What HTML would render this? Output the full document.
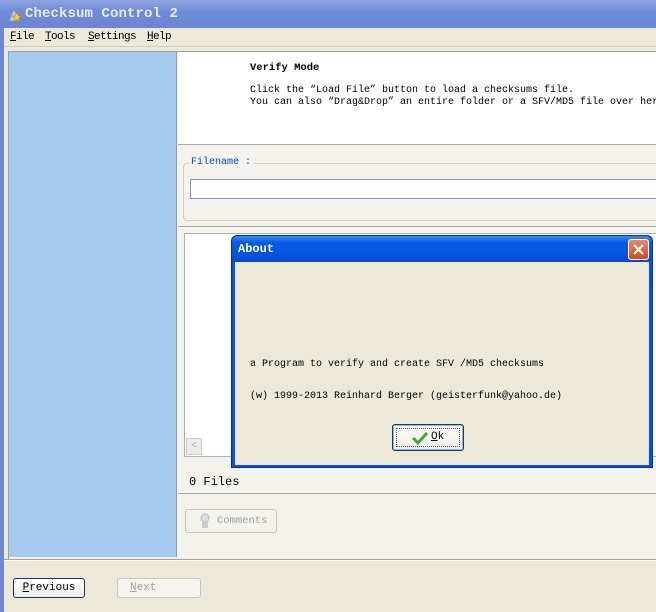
<!DOCTYPE html>
<html><head><meta charset="utf-8"><style>
*{margin:0;padding:0;box-sizing:border-box}
body{width:656px;height:612px;overflow:hidden;background:#ece9d8;font-family:"Liberation Mono","Noto Sans CJK SC",monospace;font-size:11px;color:#000;position:relative}
.abs{position:absolute}
u{text-decoration:underline}
.m{position:absolute;top:31px;font-size:11px;letter-spacing:-0.6px}
</style></head><body>
<div class="abs" style="left:0;top:0;width:656px;height:28px;background:linear-gradient(#8fa4e0,#6f8ad8 40%,#6a85d4);"></div>
<div class="abs" style="left:7px;top:7px;width:14px;height:14px;">
<svg width="16" height="16"><polygon points="2,14 7,2 12,14" fill="#c8cce8" stroke="#8890b8"/><polygon points="10,5 11.5,9 15,9 12,11 13,15 10,12.5 7,15 8,11 5,9 8.5,9" fill="#f5d030" stroke="#b08a10" stroke-width=".6"/></svg></div>
<div class="abs" style="left:25px;top:6px;color:#e8eefc;font-weight:bold;font-size:14px;letter-spacing:0.1px;">Checksum Control 2</div>
<div class="abs" style="left:0;top:28px;width:4px;height:584px;background:#6d86d6"></div>
<div class="abs" style="left:4px;top:28px;width:652px;height:19px;background:#ece9d8;border-bottom:1px solid #d0cdbd"></div>
<div class="m" style="left:10px"><u>F</u>ile</div>
<div class="m" style="left:45px"><u>T</u>ools</div>
<div class="m" style="left:88px"><u>S</u>ettings</div>
<div class="m" style="left:147px"><u>H</u>elp</div>
<div class="abs" style="left:8px;top:51px;width:648px;height:508px;border-top:1px solid #a0a0a0;border-left:1px solid #a0a0a0;background:#f3f2ec"></div>
<div class="abs" style="left:9px;top:52px;width:168px;height:505px;background:#a6caf0;border-right:1px solid #999"></div>
<div class="abs" style="left:178px;top:52px;width:478px;height:93px;background:#fff;border-bottom:1px solid #a8a8a8"></div>
<div class="abs" style="left:250px;top:62px;font-weight:bold;font-size:10.5px">Verify Mode</div>
<div class="abs" style="left:250px;top:85px;font-size:10px;line-height:12px;white-space:nowrap">Click the “Load File” button to load a checksums file.<br>You can also “Drag&amp;Drop” an entire folder or a SFV/MD5 file over here</div>
<div class="abs" style="left:183px;top:163px;width:480px;height:58px;border:1px solid #cfcdc2;border-radius:4px"></div>
<div class="abs" style="left:189px;top:157px;background:#f3f2ec;color:#0046d5;font-size:10px;padding:0 2px">Filename :</div>
<div class="abs" style="left:190px;top:179px;width:470px;height:20px;background:#fff;border:1px solid #7f9db9"></div>
<div class="abs" style="left:178px;top:226px;width:478px;height:1px;background:#a8a8a8"></div>
<div class="abs" style="left:184px;top:233px;width:480px;height:224px;background:#fff;border:1px solid #a8b0bc"></div>
<div class="abs" style="left:186px;top:438px;width:16px;height:17px;background:#ecebe4;border:1px solid #ccc;color:#aaa;font-size:10px;text-align:center;line-height:15px">&lt;</div>
<div class="abs" style="left:189px;top:475px;font-size:12px">0 Files</div>
<div class="abs" style="left:178px;top:493px;width:478px;height:1px;background:#a8a8a8"></div>
<div class="abs" style="left:185px;top:509px;width:92px;height:24px;border:1px solid #c9c7ba;border-radius:3px;background:#f3f2ec;color:#a0a0a0;font-size:10.5px;line-height:22px;padding-left:31px">Comments</div>
<div class="abs" style="left:199px;top:513px;width:10px;height:16px;"><svg width="12" height="16"><circle cx="6" cy="5" r="4" fill="#ddd" stroke="#bbb"/><rect x="3" y="9" width="6" height="6" fill="#ccc"/></svg></div>
<div class="abs" style="left:4px;top:559px;width:652px;height:2px;border-top:1px solid #a0a0a0;background:#fff"></div>
<div class="abs" style="left:13px;top:578px;width:72px;height:20px;border:1px solid #1b3563;border-radius:3px;background:linear-gradient(#fff,#ecebe6);font-size:11px;text-align:center;line-height:18px"><u>P</u>revious</div>
<div class="abs" style="left:117px;top:578px;width:84px;height:20px;border:1px solid #c9c7ba;border-radius:3px;background:#f4f3ee;color:#a3a39b;font-size:11px;line-height:18px;padding-left:12px"><u>N</u>ext</div>
<div class="abs" style="left:231px;top:235px;width:422px;height:233px;background:#0a52dc;border-radius:6px 6px 0 0;border:1px solid #0032a8"></div>
<div class="abs" style="left:232px;top:236px;width:420px;height:26px;background:linear-gradient(#3d8cf6,#0759e4 25%,#0552dc 80%,#0a48c8);border-radius:6px 6px 0 0"></div>
<div class="abs" style="left:238px;top:242px;color:#fff;font-weight:bold;font-size:12px">About</div>
<div class="abs" style="left:628px;top:239px;width:21px;height:21px;background:linear-gradient(#e88a6c,#d04a22);border:1px solid #fff;border-radius:3px"><svg width="19" height="19"><path d="M5 5L14 14M14 5L5 14" stroke="#fff" stroke-width="2.2"/></svg></div>
<div class="abs" style="left:235px;top:262px;width:414px;height:203px;background:#ece9d8"></div>
<div class="abs" style="left:250px;top:359px;font-size:10px;white-space:nowrap">a Program to verify and create SFV /MD5 checksums</div>
<div class="abs" style="left:250px;top:391px;font-size:10px;white-space:nowrap">(w) 1999-2013 Reinhard Berger (geisterfunk@yahoo.de)</div>
<div class="abs" style="left:392px;top:424px;width:72px;height:27px;border:1px solid #1b3563;border-radius:3px;background:linear-gradient(#fff,#ecebe6);box-shadow:inset 0 0 0 1px #9bb7e8"></div>
<div class="abs" style="left:396px;top:428px;width:64px;height:19px;border:1px dotted #555"></div>
<div class="abs" style="left:411px;top:430px;"><svg width="18" height="16"><path d="M2 8L7 13L16 3" stroke="#3aa83a" stroke-width="3" fill="none"/></svg></div>
<div class="abs" style="left:431px;top:431px;font-size:11px"><u>O</u>k</div>
</body></html>
